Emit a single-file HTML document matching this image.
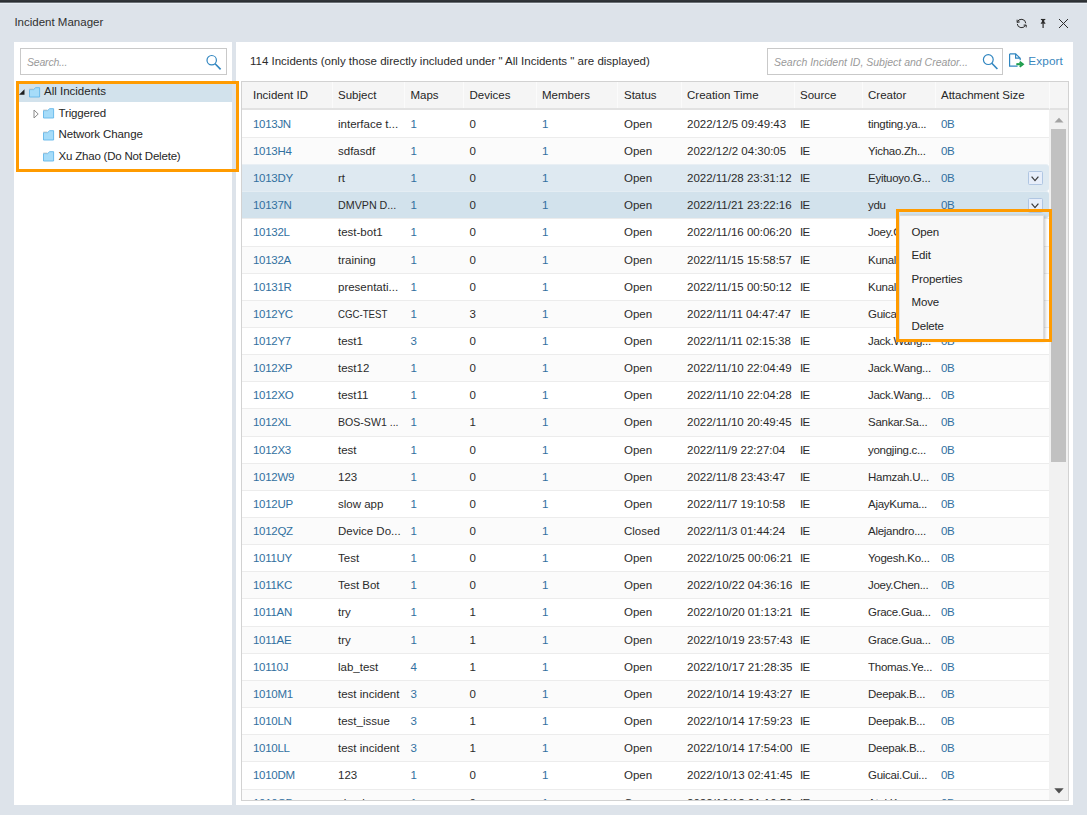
<!DOCTYPE html>
<html><head><meta charset="utf-8"><title>Incident Manager</title>
<style>
*{box-sizing:border-box;margin:0;padding:0}
html,body{width:1087px;height:815px;overflow:hidden}
body{background:#dde3ea;font-family:"Liberation Sans",sans-serif;font-size:11.5px;color:#2b2b2b;position:relative}
.abs{position:absolute}
#topbar{left:0;top:0;width:1087px;height:4px;background:linear-gradient(#34383c 0,#282c30 2px,#6b7076 2px,#6b7076 3px,#e8eef4 3px,#e8eef4 4px)}
#title{left:14.4px;top:13.8px;height:16px;line-height:16px;font-size:11.5px;color:#303030;white-space:nowrap}
#left{left:14px;top:42px;width:218px;height:763px;background:#fff}
#right{left:236px;top:42px;width:837px;height:763px;background:#fff}
.sbox{border:1px solid #c9c9c9;background:#fff;height:27px}
.ph{position:absolute;left:6px;top:6px;font-style:italic;color:#9a9a9a;font-size:10.5px;line-height:14px;white-space:nowrap}
#tree{left:16px;top:81px;width:223px;height:91px;border:3px solid #ff9b00}
.tsel{left:19px;top:84px;width:213px;height:17.7px;background:#d2e2ec}
.tl{position:absolute;line-height:16px;height:16px;white-space:nowrap;color:#262626}
#info{left:250px;top:53px;line-height:16px;white-space:nowrap}
#tbl{left:241px;top:81px;width:828px;height:720px;border:1px solid #d2d2d2;overflow:hidden;background:#fff}
#thead{position:absolute;left:0;top:0;width:807px;height:28px;background:#f5f5f5;border-bottom:2px solid #e2e2e2}
.h{position:absolute;top:4.5px;line-height:16px;white-space:nowrap;color:#262626}
.hs{position:absolute;top:0;width:1px;height:26px;background:#fbfbfb}
.row{position:absolute;left:0;width:807px;height:27.146px;background:#fff;border-top:1px solid #ececec}
.row:first-child{border-top-color:#fff}
.row.alt{background:#fbfbfb}
.row.sel1{background:#dee9f1;border-top-color:#e9eff4;border-radius:0 3px 3px 0}
.row.sel2{background:#d2e2ec;border-top-color:#e4edf3;border-radius:0 3px 3px 0}
.c{position:absolute;top:5px;line-height:16px;white-space:nowrap}
.l{color:#3270a0}
.c0{letter-spacing:-0.3px}
.sq{transform-origin:0 50%;display:inline-block}
.c8{letter-spacing:-0.27px}
.c7{letter-spacing:-0.8px}
.c9{letter-spacing:-0.5px}
.dd{position:absolute;left:786.2px;top:5.7px;width:14.6px;height:14.6px;border:1px solid #b0c6e2;border-radius:1.5px;background:#e7eefa;display:block}
.dd svg{position:absolute;left:2.3px;top:3.9px}
#sb{position:absolute;left:807px;top:0;width:20px;height:718px;background:#f1f1f1}
#sbhead{position:absolute;left:807px;top:0;width:20px;height:28px;background:#f5f5f5;border-bottom:2px solid #e2e2e2;border-left:1px solid #fbfbfb}
#thumb{position:absolute;left:2px;top:47px;width:15px;height:333px;background:#c1c1c1}
#menu{left:896px;top:209px;width:156px;height:133px;border:3px solid #ff9b00}
#menuin{left:899px;top:215px;width:145px;height:125px;background:#f8f8f8;border:1px solid #dcdcdc;box-shadow:1px 1px 3px rgba(0,0,0,.25)}
.mi{position:absolute;left:11.5px;letter-spacing:-0.15px;line-height:16px;white-space:nowrap;color:#262626}
</style></head><body>
<div id="topbar" class="abs"></div>
<div id="title" class="abs">Incident Manager</div>

<svg class="abs" style="left:1015px;top:17px" width="13" height="13" viewBox="0 0 13 13"><path d="M2.3 5.4 A4.3 4.2 0 0 1 10.75 6.3 M2.25 6.9 A4.3 4.2 0 0 0 10.5 8.1" fill="none" stroke="#2b2b2b" stroke-width="1"/><path d="M2.1 2.7 L2.2 5.4 L4.8 4.9" fill="none" stroke="#2b2b2b" stroke-width="1"/><path d="M8.6 8.1 L11.2 8 L11.2 10.4" fill="none" stroke="#2b2b2b" stroke-width="1"/></svg>
<svg class="abs" style="left:1040px;top:18px" width="7" height="11" viewBox="0 0 7 11"><path d="M0.9 1.45 L5.3 1.45" stroke="#1e1e1e" stroke-width="1"/><path d="M1.9 1.8 L4.3 1.8 L4.3 4 L5.4 5 L5.4 5.8 L0.8 5.8 L0.8 5 L1.9 4 Z" fill="#2b2b2b"/><path d="M3.1 5.6 L3.1 9.9" stroke="#3a3a3a" stroke-width="1.3"/></svg>
<svg class="abs" style="left:1058px;top:18px" width="11" height="11" viewBox="0 0 11 11"><path d="M1 1 L10 10 M10 1 L1 10" stroke="#2b2b2b" stroke-width="1" fill="none"/></svg>

<div id="left" class="abs">
  <div class="sbox abs" style="left:6px;top:6px;width:207px"><span class="ph" style="letter-spacing:-0.2px">Search...</span>
  <svg class="abs" style="left:184px;top:5px" width="18" height="18" viewBox="0 0 18 18"><circle cx="6.7" cy="6.2" r="4.7" fill="none" stroke="#3186c0" stroke-width="1.2"/><path d="M10.1 9.8 L15.6 15.4" stroke="#3186c0" stroke-width="1.6" fill="none"/></svg></div>
</div>
<div id="right" class="abs"></div>
<div class="tsel abs"></div>

<svg class="abs" style="left:19px;top:89px" width="6" height="6" viewBox="0 0 6 6"><path d="M5.5 0.3 L5.5 5.8 L0 5.8 Z" fill="#1e1e1e"/></svg>
<svg class="abs" style="left:33px;top:109px" width="7" height="10" viewBox="0 0 7 10"><path d="M1 1 L5.2 5 L1 9 Z" fill="#fff" stroke="#8a8a8a" stroke-width="1"/></svg>
<svg class="abs" style="left:29px;top:86.5px" width="12" height="11" viewBox="0 0 12 11"><path d="M0.5 2.6 L4.6 2.6 L6.6 0.7 L10.6 0.7 L10.6 10 L0.5 10 Z" fill="#a6dcf9" stroke="#62b7ea" stroke-width="0.9"/><path d="M0.3 2 L4.4 2" stroke="#c4c4c4" stroke-width="0.8"/></svg><svg class="abs" style="left:43px;top:108px" width="12" height="11" viewBox="0 0 12 11"><path d="M0.5 2.6 L4.6 2.6 L6.6 0.7 L10.6 0.7 L10.6 10 L0.5 10 Z" fill="#a6dcf9" stroke="#62b7ea" stroke-width="0.9"/><path d="M0.3 2 L4.4 2" stroke="#c4c4c4" stroke-width="0.8"/></svg><svg class="abs" style="left:43px;top:129.7px" width="12" height="11" viewBox="0 0 12 11"><path d="M0.5 2.6 L4.6 2.6 L6.6 0.7 L10.6 0.7 L10.6 10 L0.5 10 Z" fill="#a6dcf9" stroke="#62b7ea" stroke-width="0.9"/><path d="M0.3 2 L4.4 2" stroke="#c4c4c4" stroke-width="0.8"/></svg><svg class="abs" style="left:43px;top:151.3px" width="12" height="11" viewBox="0 0 12 11"><path d="M0.5 2.6 L4.6 2.6 L6.6 0.7 L10.6 0.7 L10.6 10 L0.5 10 Z" fill="#a6dcf9" stroke="#62b7ea" stroke-width="0.9"/><path d="M0.3 2 L4.4 2" stroke="#c4c4c4" stroke-width="0.8"/></svg>
<span class="tl" style="left:44px;top:82.7px">All Incidents</span>
<span class="tl" style="left:58.5px;top:104.5px;letter-spacing:-0.15px">Triggered</span>
<span class="tl" style="left:58.5px;top:126px;letter-spacing:-0.1px">Network Change</span>
<span class="tl" style="left:58.5px;top:148px;letter-spacing:-0.2px">Xu Zhao (Do Not Delete)</span>

<div id="tree" class="abs"></div>
<div id="info" class="abs">114 Incidents (only those directly included under " All Incidents " are displayed)</div>
<div class="sbox abs" style="left:767px;top:48px;width:236px"><span class="ph">Search Incident ID, Subject and Creator...</span>
  <svg class="abs" style="left:213px;top:4px" width="18" height="18" viewBox="0 0 18 18"><circle cx="7.3" cy="6.6" r="4.9" fill="none" stroke="#3186c0" stroke-width="1.2"/><path d="M10.8 10.2 L16.4 16" stroke="#3186c0" stroke-width="1.6" fill="none"/></svg></div>

<svg class="abs" style="left:1008px;top:52px" width="17" height="16" viewBox="0 0 17 16"><path d="M1.6 1.9 L7.6 1.9 L12.2 6.3 L12.2 8.2 M7.6 1.9 L7.6 6.2 L12.2 6.2 M1.6 1.9 L1.6 14.1 L9.6 14.1" fill="none" stroke="#3186c0" stroke-width="1.2"/><path d="M8.3 12.2 L13.6 12.2" fill="none" stroke="#1f9d4d" stroke-width="2.1"/><path d="M11.7 9.7 L14.9 12.2 L11.7 14.7" fill="none" stroke="#1f9d4d" stroke-width="1.9"/></svg>
<span class="abs" style="left:1028.3px;top:53px;font-size:11.8px;letter-spacing:0.1px;line-height:16px;color:#3a86bd;white-space:nowrap">Export</span>

<div id="tbl" class="abs">
<div class="row" style="top:27.850px"><span class="c c0 l" style="left:11px">1013JN</span><span class="c c1 " style="left:96px">interface t...</span><span class="c c2 l" style="left:168.5px">1</span><span class="c c3 " style="left:227.5px">0</span><span class="c c4 l" style="left:300px">1</span><span class="c c5 " style="left:382px">Open</span><span class="c c6 " style="left:445px">2022/12/5 09:49:43</span><span class="c c7 " style="left:558px">IE</span><span class="c c8 " style="left:626px">tingting.ya...</span><span class="c c9 l" style="left:699px">0B</span></div>
<div class="row alt" style="top:54.996px"><span class="c c0 l" style="left:11px">1013H4</span><span class="c c1 " style="left:96px">sdfasdf</span><span class="c c2 l" style="left:168.5px">1</span><span class="c c3 " style="left:227.5px">0</span><span class="c c4 l" style="left:300px">1</span><span class="c c5 " style="left:382px">Open</span><span class="c c6 " style="left:445px">2022/12/2 04:30:05</span><span class="c c7 " style="left:558px">IE</span><span class="c c8 " style="left:626px">Yichao.Zh...</span><span class="c c9 l" style="left:699px">0B</span></div>
<div class="row sel1" style="top:82.142px"><span class="c c0 l" style="left:11px">1013DY</span><span class="c c1 " style="left:96px">rt</span><span class="c c2 l" style="left:168.5px">1</span><span class="c c3 " style="left:227.5px">0</span><span class="c c4 l" style="left:300px">1</span><span class="c c5 " style="left:382px">Open</span><span class="c c6 " style="left:445px">2022/11/28 23:31:12</span><span class="c c7 " style="left:558px">IE</span><span class="c c8 " style="left:626px">Eyituoyo.G...</span><span class="c c9 l" style="left:699px">0B</span><span class="dd"><svg width="8" height="6" viewBox="0 0 8 6"><path d="M0.6 0.7 L4 4.6 L7.4 0.7" fill="none" stroke="#3a3a3a" stroke-width="1.25"/></svg></span></div>
<div class="row alt sel2" style="top:109.288px"><span class="c c0 l" style="left:11px">10137N</span><span class="c c1  sq" style="left:96px;transform:scaleX(0.93)">DMVPN D...</span><span class="c c2 l" style="left:168.5px">1</span><span class="c c3 " style="left:227.5px">0</span><span class="c c4 l" style="left:300px">1</span><span class="c c5 " style="left:382px">Open</span><span class="c c6 " style="left:445px">2022/11/21 23:22:16</span><span class="c c7 " style="left:558px">IE</span><span class="c c8 " style="left:626px">ydu</span><span class="c c9 l" style="left:699px">0B</span><span class="dd"><svg width="8" height="6" viewBox="0 0 8 6"><path d="M0.6 0.7 L4 4.6 L7.4 0.7" fill="none" stroke="#3a3a3a" stroke-width="1.25"/></svg></span></div>
<div class="row" style="top:136.434px"><span class="c c0 l" style="left:11px">10132L</span><span class="c c1 " style="left:96px">test-bot1</span><span class="c c2 l" style="left:168.5px">1</span><span class="c c3 " style="left:227.5px">0</span><span class="c c4 l" style="left:300px">1</span><span class="c c5 " style="left:382px">Open</span><span class="c c6 " style="left:445px">2022/11/16 00:06:20</span><span class="c c7 " style="left:558px">IE</span><span class="c c8 " style="left:626px">Joey.Chen...</span><span class="c c9 l" style="left:699px">0B</span></div>
<div class="row alt" style="top:163.580px"><span class="c c0 l" style="left:11px">10132A</span><span class="c c1 " style="left:96px">training</span><span class="c c2 l" style="left:168.5px">1</span><span class="c c3 " style="left:227.5px">0</span><span class="c c4 l" style="left:300px">1</span><span class="c c5 " style="left:382px">Open</span><span class="c c6 " style="left:445px">2022/11/15 15:58:57</span><span class="c c7 " style="left:558px">IE</span><span class="c c8 " style="left:626px">Kunal.Sin...</span><span class="c c9 l" style="left:699px">0B</span></div>
<div class="row" style="top:190.726px"><span class="c c0 l" style="left:11px">10131R</span><span class="c c1 " style="left:96px">presentati...</span><span class="c c2 l" style="left:168.5px">1</span><span class="c c3 " style="left:227.5px">0</span><span class="c c4 l" style="left:300px">1</span><span class="c c5 " style="left:382px">Open</span><span class="c c6 " style="left:445px">2022/11/15 00:50:12</span><span class="c c7 " style="left:558px">IE</span><span class="c c8 " style="left:626px">Kunal.Sin...</span><span class="c c9 l" style="left:699px">0B</span></div>
<div class="row alt" style="top:217.872px"><span class="c c0 l" style="left:11px">1012YC</span><span class="c c1  sq" style="left:96px;transform:scaleX(0.84)">CGC-TEST</span><span class="c c2 l" style="left:168.5px">1</span><span class="c c3 " style="left:227.5px">3</span><span class="c c4 l" style="left:300px">1</span><span class="c c5 " style="left:382px">Open</span><span class="c c6 " style="left:445px">2022/11/11 04:47:47</span><span class="c c7 " style="left:558px">IE</span><span class="c c8 " style="left:626px">Guicai.Cui...</span><span class="c c9 l" style="left:699px">0B</span></div>
<div class="row" style="top:245.018px"><span class="c c0 l" style="left:11px">1012Y7</span><span class="c c1 " style="left:96px">test1</span><span class="c c2 l" style="left:168.5px">3</span><span class="c c3 " style="left:227.5px">0</span><span class="c c4 l" style="left:300px">1</span><span class="c c5 " style="left:382px">Open</span><span class="c c6 " style="left:445px">2022/11/11 02:15:38</span><span class="c c7 " style="left:558px">IE</span><span class="c c8 " style="left:626px">Jack.Wang...</span><span class="c c9 l" style="left:699px">0B</span></div>
<div class="row alt" style="top:272.164px"><span class="c c0 l" style="left:11px">1012XP</span><span class="c c1 " style="left:96px">test12</span><span class="c c2 l" style="left:168.5px">1</span><span class="c c3 " style="left:227.5px">0</span><span class="c c4 l" style="left:300px">1</span><span class="c c5 " style="left:382px">Open</span><span class="c c6 " style="left:445px">2022/11/10 22:04:49</span><span class="c c7 " style="left:558px">IE</span><span class="c c8 " style="left:626px">Jack.Wang...</span><span class="c c9 l" style="left:699px">0B</span></div>
<div class="row" style="top:299.310px"><span class="c c0 l" style="left:11px">1012XO</span><span class="c c1 " style="left:96px">test11</span><span class="c c2 l" style="left:168.5px">1</span><span class="c c3 " style="left:227.5px">0</span><span class="c c4 l" style="left:300px">1</span><span class="c c5 " style="left:382px">Open</span><span class="c c6 " style="left:445px">2022/11/10 22:04:28</span><span class="c c7 " style="left:558px">IE</span><span class="c c8 " style="left:626px">Jack.Wang...</span><span class="c c9 l" style="left:699px">0B</span></div>
<div class="row alt" style="top:326.456px"><span class="c c0 l" style="left:11px">1012XL</span><span class="c c1  sq" style="left:96px;transform:scaleX(0.92)">BOS-SW1 ...</span><span class="c c2 l" style="left:168.5px">1</span><span class="c c3 " style="left:227.5px">1</span><span class="c c4 l" style="left:300px">1</span><span class="c c5 " style="left:382px">Open</span><span class="c c6 " style="left:445px">2022/11/10 20:49:45</span><span class="c c7 " style="left:558px">IE</span><span class="c c8 " style="left:626px">Sankar.Sa...</span><span class="c c9 l" style="left:699px">0B</span></div>
<div class="row" style="top:353.602px"><span class="c c0 l" style="left:11px">1012X3</span><span class="c c1 " style="left:96px">test</span><span class="c c2 l" style="left:168.5px">1</span><span class="c c3 " style="left:227.5px">0</span><span class="c c4 l" style="left:300px">1</span><span class="c c5 " style="left:382px">Open</span><span class="c c6 " style="left:445px">2022/11/9 22:27:04</span><span class="c c7 " style="left:558px">IE</span><span class="c c8 " style="left:626px">yongjing.c...</span><span class="c c9 l" style="left:699px">0B</span></div>
<div class="row alt" style="top:380.748px"><span class="c c0 l" style="left:11px">1012W9</span><span class="c c1 " style="left:96px">123</span><span class="c c2 l" style="left:168.5px">1</span><span class="c c3 " style="left:227.5px">0</span><span class="c c4 l" style="left:300px">1</span><span class="c c5 " style="left:382px">Open</span><span class="c c6 " style="left:445px">2022/11/8 23:43:47</span><span class="c c7 " style="left:558px">IE</span><span class="c c8 " style="left:626px">Hamzah.U...</span><span class="c c9 l" style="left:699px">0B</span></div>
<div class="row" style="top:407.894px"><span class="c c0 l" style="left:11px">1012UP</span><span class="c c1 " style="left:96px">slow app</span><span class="c c2 l" style="left:168.5px">1</span><span class="c c3 " style="left:227.5px">0</span><span class="c c4 l" style="left:300px">1</span><span class="c c5 " style="left:382px">Open</span><span class="c c6 " style="left:445px">2022/11/7 19:10:58</span><span class="c c7 " style="left:558px">IE</span><span class="c c8 " style="left:626px">AjayKuma...</span><span class="c c9 l" style="left:699px">0B</span></div>
<div class="row alt" style="top:435.040px"><span class="c c0 l" style="left:11px">1012QZ</span><span class="c c1 " style="left:96px">Device Do...</span><span class="c c2 l" style="left:168.5px">1</span><span class="c c3 " style="left:227.5px">0</span><span class="c c4 l" style="left:300px">1</span><span class="c c5 " style="left:382px">Closed</span><span class="c c6 " style="left:445px">2022/11/3 01:44:24</span><span class="c c7 " style="left:558px">IE</span><span class="c c8 " style="left:626px">Alejandro....</span><span class="c c9 l" style="left:699px">0B</span></div>
<div class="row" style="top:462.186px"><span class="c c0 l" style="left:11px">1011UY</span><span class="c c1 " style="left:96px">Test</span><span class="c c2 l" style="left:168.5px">1</span><span class="c c3 " style="left:227.5px">0</span><span class="c c4 l" style="left:300px">1</span><span class="c c5 " style="left:382px">Open</span><span class="c c6 " style="left:445px">2022/10/25 00:06:21</span><span class="c c7 " style="left:558px">IE</span><span class="c c8 " style="left:626px">Yogesh.Ko...</span><span class="c c9 l" style="left:699px">0B</span></div>
<div class="row alt" style="top:489.332px"><span class="c c0 l" style="left:11px">1011KC</span><span class="c c1 " style="left:96px">Test Bot</span><span class="c c2 l" style="left:168.5px">1</span><span class="c c3 " style="left:227.5px">0</span><span class="c c4 l" style="left:300px">1</span><span class="c c5 " style="left:382px">Open</span><span class="c c6 " style="left:445px">2022/10/22 04:36:16</span><span class="c c7 " style="left:558px">IE</span><span class="c c8 " style="left:626px">Joey.Chen...</span><span class="c c9 l" style="left:699px">0B</span></div>
<div class="row" style="top:516.478px"><span class="c c0 l" style="left:11px">1011AN</span><span class="c c1 " style="left:96px">try</span><span class="c c2 l" style="left:168.5px">1</span><span class="c c3 " style="left:227.5px">1</span><span class="c c4 l" style="left:300px">1</span><span class="c c5 " style="left:382px">Open</span><span class="c c6 " style="left:445px">2022/10/20 01:13:21</span><span class="c c7 " style="left:558px">IE</span><span class="c c8 " style="left:626px">Grace.Gua...</span><span class="c c9 l" style="left:699px">0B</span></div>
<div class="row alt" style="top:543.624px"><span class="c c0 l" style="left:11px">1011AE</span><span class="c c1 " style="left:96px">try</span><span class="c c2 l" style="left:168.5px">1</span><span class="c c3 " style="left:227.5px">1</span><span class="c c4 l" style="left:300px">1</span><span class="c c5 " style="left:382px">Open</span><span class="c c6 " style="left:445px">2022/10/19 23:57:43</span><span class="c c7 " style="left:558px">IE</span><span class="c c8 " style="left:626px">Grace.Gua...</span><span class="c c9 l" style="left:699px">0B</span></div>
<div class="row" style="top:570.770px"><span class="c c0 l" style="left:11px">10110J</span><span class="c c1 " style="left:96px">lab_test</span><span class="c c2 l" style="left:168.5px">4</span><span class="c c3 " style="left:227.5px">1</span><span class="c c4 l" style="left:300px">1</span><span class="c c5 " style="left:382px">Open</span><span class="c c6 " style="left:445px">2022/10/17 21:28:35</span><span class="c c7 " style="left:558px">IE</span><span class="c c8 " style="left:626px">Thomas.Ye...</span><span class="c c9 l" style="left:699px">0B</span></div>
<div class="row alt" style="top:597.916px"><span class="c c0 l" style="left:11px">1010M1</span><span class="c c1 " style="left:96px">test incident</span><span class="c c2 l" style="left:168.5px">3</span><span class="c c3 " style="left:227.5px">0</span><span class="c c4 l" style="left:300px">1</span><span class="c c5 " style="left:382px">Open</span><span class="c c6 " style="left:445px">2022/10/14 19:43:27</span><span class="c c7 " style="left:558px">IE</span><span class="c c8 " style="left:626px">Deepak.B...</span><span class="c c9 l" style="left:699px">0B</span></div>
<div class="row" style="top:625.062px"><span class="c c0 l" style="left:11px">1010LN</span><span class="c c1 " style="left:96px">test_issue</span><span class="c c2 l" style="left:168.5px">3</span><span class="c c3 " style="left:227.5px">1</span><span class="c c4 l" style="left:300px">1</span><span class="c c5 " style="left:382px">Open</span><span class="c c6 " style="left:445px">2022/10/14 17:59:23</span><span class="c c7 " style="left:558px">IE</span><span class="c c8 " style="left:626px">Deepak.B...</span><span class="c c9 l" style="left:699px">0B</span></div>
<div class="row alt" style="top:652.208px"><span class="c c0 l" style="left:11px">1010LL</span><span class="c c1 " style="left:96px">test incident</span><span class="c c2 l" style="left:168.5px">3</span><span class="c c3 " style="left:227.5px">1</span><span class="c c4 l" style="left:300px">1</span><span class="c c5 " style="left:382px">Open</span><span class="c c6 " style="left:445px">2022/10/14 17:54:00</span><span class="c c7 " style="left:558px">IE</span><span class="c c8 " style="left:626px">Deepak.B...</span><span class="c c9 l" style="left:699px">0B</span></div>
<div class="row" style="top:679.354px"><span class="c c0 l" style="left:11px">1010DM</span><span class="c c1 " style="left:96px">123</span><span class="c c2 l" style="left:168.5px">1</span><span class="c c3 " style="left:227.5px">0</span><span class="c c4 l" style="left:300px">1</span><span class="c c5 " style="left:382px">Open</span><span class="c c6 " style="left:445px">2022/10/13 02:41:45</span><span class="c c7 " style="left:558px">IE</span><span class="c c8 " style="left:626px">Guicai.Cui...</span><span class="c c9 l" style="left:699px">0B</span></div>
<div class="row alt" style="top:706.500px"><span class="c c0 l" style="left:11px">1010CB</span><span class="c c1 " style="left:96px">check</span><span class="c c2 l" style="left:168.5px">1</span><span class="c c3 " style="left:227.5px">0</span><span class="c c4 l" style="left:300px">1</span><span class="c c5 " style="left:382px">Open</span><span class="c c6 " style="left:445px">2022/10/12 21:10:52</span><span class="c c7 " style="left:558px">IE</span><span class="c c8 " style="left:626px">Atul.Kumar...</span><span class="c c9 l" style="left:699px">0B</span></div>
<div id="thead">
<span class="h" style="left:11px">Incident ID</span><span class="h" style="left:96px">Subject</span><span class="h" style="left:168.5px">Maps</span><span class="h" style="left:227.5px">Devices</span><span class="h" style="left:300px">Members</span><span class="h" style="left:382px">Status</span><span class="h" style="left:445px">Creation Time</span><span class="h" style="left:558px">Source</span><span class="h" style="left:626px">Creator</span><span class="h" style="left:699px">Attachment Size</span><span class="hs" style="left:90px"></span><span class="hs" style="left:162px"></span><span class="hs" style="left:221px"></span><span class="hs" style="left:294px"></span><span class="hs" style="left:375px"></span><span class="hs" style="left:439px"></span><span class="hs" style="left:552px"></span><span class="hs" style="left:620px"></span><span class="hs" style="left:693px"></span>
</div>
<div id="sb"><div id="thumb"></div>
<svg class="abs" style="left:5px;top:35px" width="10" height="6" viewBox="0 0 10 6"><path d="M0.5 5.5 L5 0.7 L9.5 5.5 Z" fill="#a3a3a3"/></svg>
<svg class="abs" style="left:5px;top:706px" width="10" height="6" viewBox="0 0 10 6"><path d="M0.3 0.3 L9.7 0.3 L5 5.5 Z" fill="#505050"/></svg>
</div>
<div id="sbhead"></div>
</div>
<div id="menuin" class="abs">
<span class="mi" style="top:7.5px">Open</span>
<span class="mi" style="top:30.6px">Edit</span>
<span class="mi" style="top:54.7px">Properties</span>
<span class="mi" style="top:77.8px">Move</span>
<span class="mi" style="top:102px">Delete</span>
</div>
<div id="menu" class="abs"></div>
</body></html>
